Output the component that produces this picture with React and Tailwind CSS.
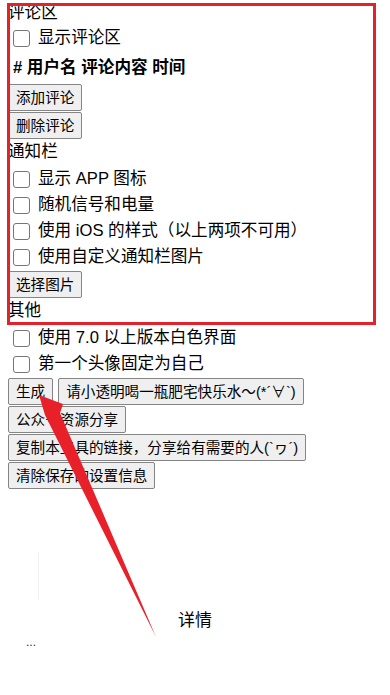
import React from 'react';

const font = { fontFamily: '"Liberation Sans", "Noto Sans CJK SC", sans-serif' };

function Check({ label }) {
  return (
    <label className="flex items-center h-[26px] pl-[5px]">
      <input
        type="checkbox"
        className="appearance-none w-[17px] h-[17px] border border-[#767676] rounded-[3px] bg-white shrink-0"
      />
      <span className="ml-[8px] text-[16.6px] leading-[20px] text-black whitespace-nowrap">{label}</span>
    </label>
  );
}

function Btn({ children }) {
  return (
    <button className="h-[27px] px-[7px] bg-[#efefef] border border-[#858585] rounded-[2px] text-[14.6px] leading-[18px] text-black whitespace-nowrap">
      {children}
    </button>
  );
}

export default function App() {
  return (
    <div className="relative w-[390px] min-h-[695px] bg-white overflow-hidden text-black" style={font}>
      <div className="flex flex-col items-start px-[8px] pt-[3px]">
        <div className="h-[20px] flex items-center text-[16.6px]">评论区</div>
        <div className="h-[30px] flex items-center">
          <Check label="显示评论区" />
        </div>
        <div className="h-[31px] flex items-center pl-[5px] text-[16.6px] font-bold">
          # 用户名 评论内容 时间
        </div>
        <div className="flex flex-col items-start gap-[1px]">
          <Btn>添加评论</Btn>
          <Btn>删除评论</Btn>
        </div>
        <div className="h-[27px] flex items-center text-[16.6px]">通知栏</div>
        <Check label="显示 APP 图标" />
        <Check label="随机信号和电量" />
        <Check label="使用 iOS 的样式（以上两项不可用）" />
        <Check label="使用自定义通知栏图片" />
        <div className="mt-[1px]">
          <Btn>选择图片</Btn>
        </div>
        <div className="h-[27px] flex items-center text-[16.6px]">其他</div>
        <Check label="使用 7.0 以上版本白色界面" />
        <Check label="第一个头像固定为自己" />
        <div className="mt-[1px] flex flex-col items-start gap-[1px]">
          <div className="flex gap-[5px]">
            <Btn>生成</Btn>
            <Btn>请小透明喝一瓶肥宅快乐水～(*´∀`)</Btn>
          </div>
          <Btn>公众号资源分享</Btn>
          <Btn>复制本工具的链接，分享给有需要的人(`ヮ´)</Btn>
          <Btn>清除保存的设置信息</Btn>
        </div>
      </div>

      <div className="mt-[63px] pl-[38px]">
        <div className="w-px h-[48px] bg-[#f0f0f0]" />
      </div>
      <div className="mt-[11px] h-[20px] flex items-center justify-center text-[17px]">详情</div>
      <div className="pl-[26px] h-[22px] flex items-center text-[12px] leading-none text-[#333]">...</div>

      <svg className="absolute inset-0 pointer-events-none" width="390" height="695" viewBox="0 0 390 695">
        <rect x="8.5" y="4.5" width="366" height="319" fill="none" stroke="#e3232b" strokeWidth="3" />
        <polygon points="39,395 63,404 60,413 156,637 45,415" fill="#e8202a" />
      </svg>
    </div>
  );
}
